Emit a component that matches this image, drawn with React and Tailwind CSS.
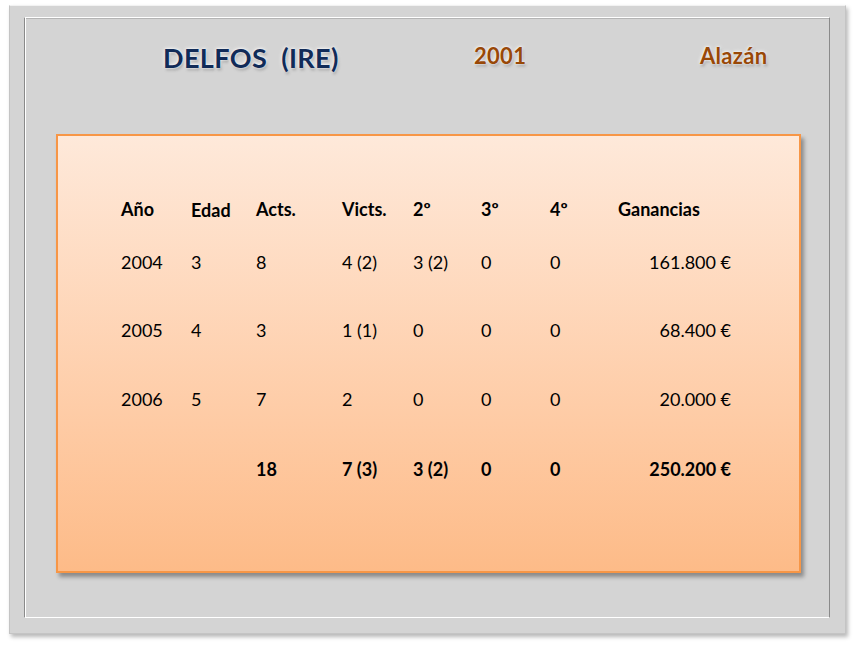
import React from "react";

const rows = [
  ["2004", "3", "8", "4 (2)", "3 (2)", "0", "0", "161.800 €"],
  ["2005", "4", "3", "1 (1)", "0", "0", "0", "68.400 €"],
  ["2006", "5", "7", "2", "0", "0", "0", "20.000 €"],
];
const totals = ["", "", "18", "7 (3)", "3 (2)", "0", "0", "250.200 €"];
const header = ["Año", "Edad", "Acts.", "Victs.", "2º", "3º", "4º", "Ganancias"];
const widths = ["w-[70px]", "w-[65px]", "w-[86px]", "w-[71px]", "w-[68px]", "w-[69px]", "w-[68px]", "w-[113px]"];

function Row({ cells, bold, isHeader, className }) {
  return (
    <div className={`flex h-[24px] items-center ${bold ? "font-bold" : ""} ${className}`}>
      {cells.map((c, i) => (
        <div
          key={i}
          className={`${widths[i]} shrink-0 whitespace-pre ${i === 7 && !isHeader ? "text-right" : ""} ${isHeader && i === 1 ? "pt-[3px]" : ""}`}
        >
          {c}
        </div>
      ))}
    </div>
  );
}

export default function App() {
  const glow = "[text-shadow:0_0_2px_#fff,0_0_4px_#fff,1px_2px_3px_rgba(0,0,0,0.35)]";
  return (
    <div className="w-[856px] h-[648px] bg-white pl-[9px] pt-[5px] font-['Lato','Open_Sans',sans-serif]">
      <div className="w-[837px] h-[629px] bg-[#d4d4d4] border border-[#c4c4c4] border-t-[#f2f2f2] shadow-[2px_3px_4px_rgba(0,0,0,0.28)] pl-[14px] pr-[15px] pt-[11px]">
        <div className="h-[601px] border border-t-white border-b-white border-l-[#8a8a8a] border-r-[#8a8a8a] shadow-[inset_1px_0_0_#fff,inset_0_1px_0_#b4b4b4] flex flex-col">
          <div className="h-[116px] flex pl-[138px] pt-[24px] font-bold">
            <div className={`w-[311px] text-[27px] tracking-[0.4px] leading-[32px] text-[#112b58] whitespace-pre ${glow}`}>DELFOS  (IRE)</div>
            <div className={`w-[226px] text-[22px] tracking-[0.3px] leading-[28px] text-[#984807] ${glow}`}>2001</div>
            <div className={`text-[22px] tracking-[0.3px] leading-[28px] text-[#984807] ${glow}`}>Alazán</div>
          </div>
          <div className="ml-[31px] mr-[28px] h-[439px] border-2 border-[#f79646] bg-gradient-to-b from-[#fee9da] to-[#fdbb88] shadow-[3px_4px_4px_rgba(0,0,0,0.35)] pl-[63px] pt-[61px] text-[18px] text-black">
            <Row cells={header} bold isHeader />
            <Row cells={rows[0]} className="mt-[29px]" />
            <Row cells={rows[1]} className="mt-[44px]" />
            <Row cells={rows[2]} className="mt-[45px]" />
            <Row cells={totals} bold className="mt-[46px]" />
          </div>
        </div>
      </div>
    </div>
  );
}
